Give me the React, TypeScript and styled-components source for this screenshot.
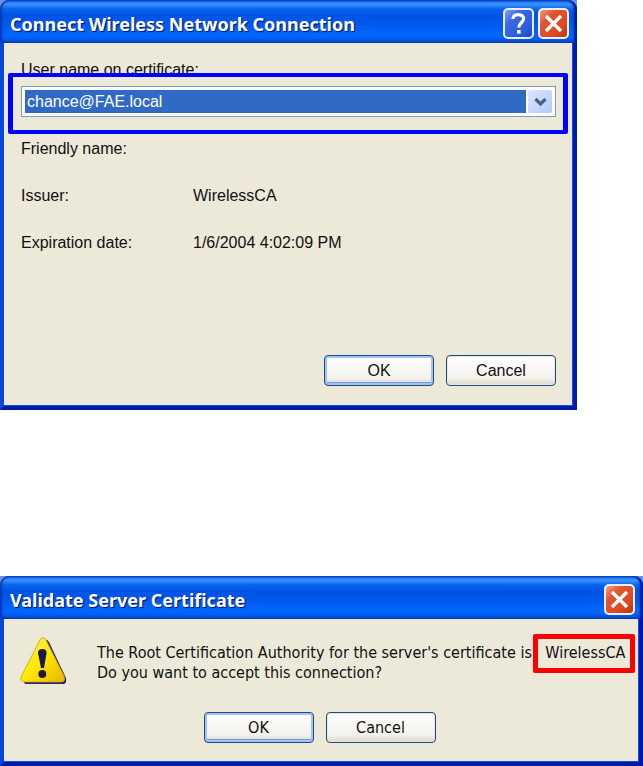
import React from "react";
import styled, { createGlobalStyle } from "styled-components";

const GlobalStyle = createGlobalStyle`
  *, *::before, *::after { box-sizing: border-box; }
  body { margin: 0; background: #fff; color: #111; }
`;

const Page = styled.main`
  display: flex;
  flex-direction: column;
  align-items: flex-start;
  gap: 166px;
`;

const Dialog = styled.section<{ $maxWidth: number; $face: string }>`
  width: 100%;
  max-width: ${(p) => p.$maxWidth}px;
  background: #ece9d8;
  border: solid #0a45dc;
  border-width: 0 4px 4px;
  border-right-color: #0019a8;
  border-bottom-color: #0019a8;
  box-shadow: inset -1px -1px 0 #0a50e8;
  font-family: ${(p) => p.$face};
  font-size: 16px;
  line-height: 20px;
`;

const TitleCorner = styled.div`
  margin: 0 -4px;
  background: #6f8fe0;
`;

const TitleBar = styled.header`
  display: flex;
  align-items: center;
  gap: 4px;
  height: 43px;
  padding: 4px 8px 0 10px;
  border-radius: 9px 9px 0 0;
  background: linear-gradient(#0a54dc 0, #3c96ff 4px, #0a62ee 9px, #0054e3 15px, #0058ec 24px, #0066ff 34px, #0062f8 38px, #0040c4 43px);
  box-shadow: inset 2px 0 2px #0038b8, inset -3px 0 2px #001ea0;
`;

const Title = styled.h1`
  flex: 1;
  margin: 0;
  color: #fff;
  font: bold 18px/24px "Noto Sans", "Open Sans", sans-serif;
  text-shadow: 1px 1px 1px #00146e;
  white-space: nowrap;
`;

const CaptionButton = styled.button<{ $danger?: boolean }>`
  display: grid;
  place-items: center;
  width: 31px;
  height: 31px;
  padding: 0;
  border: 2px solid #e8eefc;
  border-radius: 5px;
  background: ${(p) =>
    p.$danger
      ? "linear-gradient(135deg, #f0a088 0, #e25432 30%, #dc4a20 70%, #b83410 100%)"
      : "linear-gradient(135deg, #86a4f4 0, #3a68e4 30%, #2c5ee0 70%, #1c48cc 100%)"};
`;

const CertificateBody = styled.div`
  padding: 17px 17px 20px;
`;

const FieldLabel = styled.label`
  display: block;
  margin-bottom: 6px;
`;

const ComboFrame = styled.div`
  position: relative;
  display: grid;
  grid-template-columns: 1fr 24px;
  gap: 2px;
  height: 31px;
  padding: 3px;
  border: 1px solid #7f9db9;
  background: #fff;
`;

const Combo = styled.select`
  appearance: none;
  width: 100%;
  min-width: 0;
  height: 23px;
  padding: 0 2px;
  border: 0;
  border-radius: 0;
  outline: 0;
  background: #316ac5;
  color: #fff;
  font: inherit;
`;

const ComboArrow = styled.span`
  display: grid;
  place-items: center;
  border-radius: 2px;
  background: linear-gradient(135deg, #dce6fe, #b4c8f8);
  pointer-events: none;
`;

const BlueMarker = styled.span`
  position: absolute;
  inset: -14px -13px -18px -14px;
  border: solid #00f;
  border-width: 4px 5px;
  border-radius: 2px;
  pointer-events: none;
`;

const Details = styled.dl`
  display: grid;
  grid-template-columns: 172px 1fr;
  row-gap: 27px;
  margin: 22px 0 102px;
`;

const Term = styled.dt`
  margin: 0;
`;

const Value = styled.dd`
  margin: 0;
`;

const Actions = styled.div<{ $centered?: boolean }>`
  display: flex;
  justify-content: ${(p) => (p.$centered ? "center" : "flex-end")};
  gap: 12px;
  padding-right: ${(p) => (p.$centered ? 14 : 0)}px;
`;

const PushButton = styled.button<{ $primary?: boolean }>`
  width: 110px;
  height: 31px;
  padding: 0;
  border: 1px solid #1c4c84;
  border-radius: 4px;
  background: linear-gradient(#fff, #f3f2ec 75%, #dcd6c8);
  box-shadow: ${(p) => (p.$primary ? "inset 0 0 0 2px #a4c0f4, inset 0 -3px 0 #7098e4" : "inset 0 0 0 1px #e8e6dc")};
  color: #111;
  font: inherit;
`;

const ValidateBody = styled.div`
  padding: 17px 6px 19px 16px;
`;

const Message = styled.div`
  display: flex;
  align-items: flex-start;
  gap: 29px;
  margin-bottom: 27px;
`;

const MessageText = styled.p`
  flex: 1;
  margin: 7px 0 0;
`;

const Marked = styled.span`
  position: relative;
  display: inline-block;
  margin-left: 4px;

  &::after {
    content: "";
    position: absolute;
    inset: -9px -10px -10px -12px;
    border: 5px solid #f00;
    border-radius: 2px;
    pointer-events: none;
  }
`;

const CloseIcon = () => (
  <svg width="19" height="19" viewBox="0 0 19 19" aria-hidden="true">
    <path d="M2 2L17 17M17 2L2 17" stroke="#fff" strokeWidth="3.4" />
  </svg>
);

const HelpIcon = () => (
  <svg width="19" height="23" viewBox="0 0 19 23" fill="none" aria-hidden="true">
    <path d="M4 7C4 3.600 6.400 2.600 9.200 2.600C12.400 2.600 14.600 4.200 14.600 7C14.600 10.400 9.800 10.800 9.800 15.600" stroke="#fff" strokeWidth="3.200" />
    <rect x="8" y="18" width="3.600" height="3.600" fill="#fff" />
  </svg>
);

const ChevronIcon = () => (
  <svg width="13" height="10" viewBox="0 0 13 10" fill="none" aria-hidden="true">
    <path d="M1.500 2L6.500 7L11.500 2" stroke="#4d6185" strokeWidth="3.200" />
  </svg>
);

const WarningIcon = () => (
  <svg width="48" height="49" viewBox="0 0 48 49" role="img" aria-label="Warning">
    <defs>
      <linearGradient id="warning-fill" x1="0" y1="0" x2="1" y2="1">
        <stop offset="0" stopColor="#fff36a" />
        <stop offset="0.5" stopColor="#ffe800" />
        <stop offset="1" stopColor="#e8b400" />
      </linearGradient>
    </defs>
    <path d="M25 4Q27 3 29 6L46 42Q47 48 43 48H5L4 46Z" fill="#26246a" />
    <path d="M20.500 3Q23 0 25.500 3L44 40Q46 46 41 46H5Q-1 46 1.500 40Z" fill="url(#warning-fill)" stroke="#d0a000" strokeWidth="0.800" />
    <path d="M18 17Q18 13 22.300 13Q26.600 13 26.600 17L24 32H21Z" fill="#1c1840" />
    <circle cx="22.300" cy="38" r="3.900" fill="#1c1840" />
  </svg>
);

const CertificateDialog = () => (
  <Dialog $maxWidth={577} $face={'"Liberation Sans", Arial, sans-serif'} aria-labelledby="connect-title">
    <TitleCorner>
      <TitleBar>
        <Title id="connect-title">Connect Wireless Network Connection</Title>
        <CaptionButton type="button" aria-label="Help"><HelpIcon /></CaptionButton>
        <CaptionButton type="button" $danger aria-label="Close"><CloseIcon /></CaptionButton>
      </TitleBar>
    </TitleCorner>
    <CertificateBody>
      <FieldLabel htmlFor="certificate-user">User name on certificate:</FieldLabel>
      <ComboFrame>
        <Combo id="certificate-user" defaultValue="chance@FAE.local">
          <option>chance@FAE.local</option>
        </Combo>
        <ComboArrow><ChevronIcon /></ComboArrow>
        <BlueMarker />
      </ComboFrame>
      <Details>
        <Term>Friendly name:</Term>
        <Value />
        <Term>Issuer:</Term>
        <Value>WirelessCA</Value>
        <Term>Expiration date:</Term>
        <Value>1/6/2004 4:02:09 PM</Value>
      </Details>
      <Actions>
        <PushButton type="button" $primary>OK</PushButton>
        <PushButton type="button">Cancel</PushButton>
      </Actions>
    </CertificateBody>
  </Dialog>
);

const ValidateDialog = () => (
  <Dialog $maxWidth={643} $face={'"DejaVu Sans Condensed", "DejaVu Sans", sans-serif'} aria-labelledby="validate-title">
    <TitleCorner>
      <TitleBar>
        <Title id="validate-title">Validate Server Certificate</Title>
        <CaptionButton type="button" $danger aria-label="Close"><CloseIcon /></CaptionButton>
      </TitleBar>
    </TitleCorner>
    <ValidateBody>
      <Message>
        <WarningIcon />
        <MessageText>
          The Root Certification Authority for the server's certificate is: <Marked>WirelessCA</Marked>
          <br />
          Do you want to accept this connection?
        </MessageText>
      </Message>
      <Actions $centered>
        <PushButton type="button" $primary>OK</PushButton>
        <PushButton type="button">Cancel</PushButton>
      </Actions>
    </ValidateBody>
  </Dialog>
);

export default function App() {
  return (
    <>
      <GlobalStyle />
      <Page>
        <CertificateDialog />
        <ValidateDialog />
      </Page>
    </>
  );
}
